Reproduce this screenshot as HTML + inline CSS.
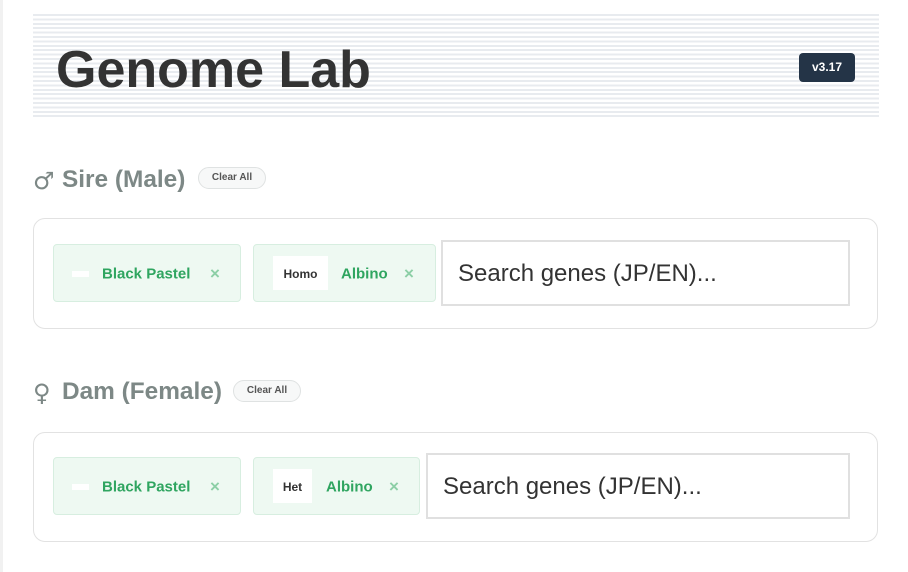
<!DOCTYPE html>
<html><head><style>
body{margin:0;width:908px;height:572px;background:#fff;font-family:"Liberation Sans",sans-serif;position:relative;overflow:hidden}
.edge{position:absolute;left:0;top:0;width:3px;height:572px;background:#f1f1f1}
.hdr{position:absolute;left:33px;top:14px;width:846px;height:105px;background:repeating-linear-gradient(to bottom,#e8ebef 0,#e8ebef 2px,#fff 2px,#fff 4.4px)}
.title{position:absolute;left:56px;top:38px;font-size:52px;font-weight:bold;color:#333;line-height:64px}
.ver{position:absolute;left:799px;top:53px;width:56px;height:29px;background:#243447;border-radius:4px;color:#fff;font-size:12px;font-weight:bold;text-align:center;line-height:29px}
.h{position:absolute;left:62px;font-size:24.4px;font-weight:bold;color:#7d8886;line-height:28px}
.sym{position:absolute;left:33px;font-size:24px;color:#7d8886;line-height:28px;font-family:"DejaVu Sans",sans-serif}
.clr{position:absolute;height:20px;border:1px solid #dfe2e2;background:#f7f8f8;border-radius:11px;font-size:10px;font-weight:bold;color:#555;text-align:center;line-height:20px;width:66px}
.box{position:absolute;left:33px;width:843px;border:1px solid #e2e2e2;border-radius:12px}
.chip{position:absolute;background:#eef9f2;border:1px solid #d7eee0;border-radius:4px;box-sizing:border-box;color:#2fa560;font-weight:bold;font-size:15px}
.chip span{position:absolute;top:50%;transform:translateY(-45%)}
.dash{position:absolute;width:17px;height:6px;background:#fff;top:50%;margin-top:-2px;left:18px}
.tag{position:absolute;background:#fff;color:#333;font-size:12px;font-weight:bold;text-align:center;top:11px;height:34px;line-height:36px}
.x{color:#8ccfa6;font-size:17px}
.inp{position:absolute;border:2px solid #e0e0e0;box-sizing:border-box;font-size:24px;color:#333;padding-left:15px;background:#fff}
</style></head><body>
<div class="edge"></div>
<div class="hdr"></div>
<div class="title">Genome Lab</div>
<div class="ver">v3.17</div>

<div class="sym" style="top:167px">♂</div>
<div class="h" style="top:166px">Sire (Male)</div>
<div class="clr" style="left:198px;top:167px">Clear All</div>
<div class="box" style="top:218px;height:109px"></div>
<div class="chip" style="left:53px;top:244px;width:188px;height:58px"><div class="dash"></div><span style="left:48px">Black Pastel</span><span class="x" style="left:156px">×</span></div>
<div class="chip" style="left:253px;top:244px;width:183px;height:58px"><div class="tag" style="left:19px;width:55px">Homo</div><span style="left:87px">Albino</span><span class="x" style="left:150px">×</span></div>
<div class="inp" style="left:441px;top:240px;width:409px;height:66px;line-height:63px">Search genes (JP/EN)...</div>

<div class="sym" style="top:379px">♀</div>
<div class="h" style="top:378px">Dam (Female)</div>
<div class="clr" style="left:233px;top:380px">Clear All</div>
<div class="box" style="top:432px;height:108px"></div>
<div class="chip" style="left:53px;top:457px;width:188px;height:58px"><div class="dash"></div><span style="left:48px">Black Pastel</span><span class="x" style="left:156px">×</span></div>
<div class="chip" style="left:253px;top:457px;width:167px;height:58px"><div class="tag" style="left:19px;width:39px">Het</div><span style="left:72px">Albino</span><span class="x" style="left:135px">×</span></div>
<div class="inp" style="left:426px;top:453px;width:424px;height:66px;line-height:63px">Search genes (JP/EN)...</div>
</body></html>
